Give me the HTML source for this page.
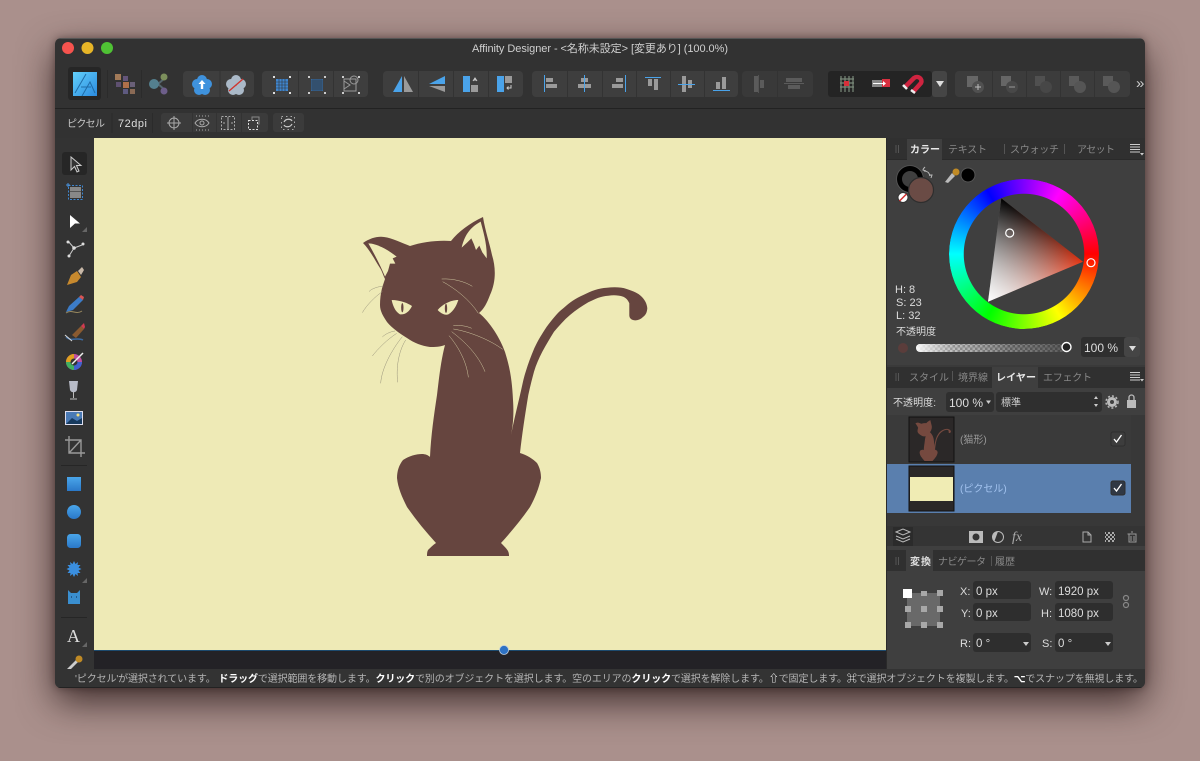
<!DOCTYPE html>
<html><head><meta charset="utf-8"><style>
html,body{margin:0;padding:0;background:#aa908c;width:1200px;height:761px;overflow:hidden}
#win{position:absolute;left:55px;top:38px;width:1090px;height:650px;border-radius:6px;box-shadow:0 14px 36px rgba(30,15,15,.75),0 0 8px rgba(30,15,15,.4)}
svg{position:absolute;left:0;top:0}
text{font-family:"Liberation Sans","Noto Sans CJK JP",sans-serif;font-size:11px;fill:#c8c8c8}
text[textLength]{font-size:10px}
.b{fill:#3e3e3e}.s{stroke:#333;stroke-width:1}
.g{fill:#9a9a9a}.bl{fill:#4aa3ea}
.d{opacity:.35}
</style></head><body><div id="win"></div>
<svg width="1200" height="761" viewBox="0 0 1200 761" xmlns="http://www.w3.org/2000/svg">
<defs>
<path id="cat" d="M363 243C370 238 378 236 384 237C392 238 402 243 410 246C422 242 438 240 451 241C458 232 470 223 483 217C485 230 490 245 492 255C496 268 496 282 490 295C487 303 484 309 479 313C490 322 500 338 505 352C510 368 512 380 513 400C514 415 513 425 511 435C514 420 517 408 520 395C522 387 523 380 525.700 371.700C528 364 531 356 534.300 348.300C538 340 542 334 546.700 326.700C552 320 557 313 563.300 308.300C569 303 576 298 583.300 295C591 291 599 288 606.700 287.700C614 287 621 287 626.700 289C633 291 638 293 641.700 296.700C645 300 647 304 647.300 308.300C647 312 646 315 643 317C640 320 636 321 633 320C630 319 629.300 317 629.300 315L629.300 303.300C628 300 626 298 623.300 296.700C618 295 613 295 608.300 295.700C601 296 595 299 588.300 302.300C582 306 576 310 570 315C564 320 559 326 554 331.700C550 338 546 345 542.300 351.700C539 358 536 365 534 371.700C532 379 530 387 528.300 395C525 415 522 435 520 453C527 455 533 459 537 463C540 468 541 473 541 478C539 488 535 498 530 507C521 520 511 532 501 543C504 546 507 549 508 551C509 553 509 555 509 556L427 556C427 554 427 552 428 550C430 548 433 545 436 543C426 532 416 520 407 507C402 497 398 488 397 478C397 471 399 465 403 460C409 456 416 454 422 454C425 454 428 455 430 457C431 435 434 415 437 395C439 378 441 360 445 345C440 347 435 347 430 347C422 346 414 343 407 338C399 333 392 328 387 322C383 316 380 311 380 305C380 298 381 291 383 285L385 279C383 275 382 271 380 268C376 262 370 250 363 243Z"/>
<pattern id="chk" width="5" height="5" patternUnits="userSpaceOnUse"><rect width="5" height="5" fill="#666"/><rect width="2.500" height="2.500" fill="#aaa"/><rect x="2.500" y="2.500" width="2.500" height="2.500" fill="#aaa"/></pattern>
<pattern id="chk2" width="4" height="4" patternUnits="userSpaceOnUse"><rect width="4" height="4" fill="#333"/><rect width="2" height="2" fill="#aaa"/><rect x="2" y="2" width="2" height="2" fill="#aaa"/></pattern>
<linearGradient id="fade" x1="0" x2="1" y1="0" y2="0"><stop offset="0" stop-color="#fff" stop-opacity=".95"/><stop offset=".25" stop-color="#ddd" stop-opacity=".35"/><stop offset=".6" stop-color="#555" stop-opacity=".45"/><stop offset="1" stop-color="#333" stop-opacity=".7"/></linearGradient>
<linearGradient id="tBase" gradientUnits="userSpaceOnUse" x1="995" y1="250" x2="1083" y2="262"><stop offset="0" stop-color="#807a78"/><stop offset="1" stop-color="#e8320f"/></linearGradient>
<linearGradient id="tBlack" gradientUnits="userSpaceOnUse" x1="1001" y1="198" x2="1035" y2="282"><stop offset="0" stop-color="#000"/><stop offset="1" stop-color="#000" stop-opacity="0"/></linearGradient>
<linearGradient id="tWhite" gradientUnits="userSpaceOnUse" x1="988" y1="302" x2="1042" y2="230"><stop offset="0" stop-color="#fff"/><stop offset="1" stop-color="#fff" stop-opacity="0"/></linearGradient>
<linearGradient id="blueT" x1="0" y1="0" x2="0" y2="1"><stop offset="0" stop-color="#4aa6ea"/><stop offset="1" stop-color="#2a78c8"/></linearGradient>
<linearGradient id="aff" x1="0" y1="0" x2="1" y2="1"><stop offset="0" stop-color="#62d0fb"/><stop offset="1" stop-color="#2b8be0"/></linearGradient>
<clipPath id="wc"><rect x="55" y="38" width="1090" height="650" rx="6"/></clipPath>
<clipPath id="th1"><rect x="910" y="418" width="43" height="43"/></clipPath>
</defs>
<g clip-path="url(#wc)">
<rect x="55" y="38" width="1090" height="650" fill="#323232"/>
<rect x="55" y="38" width="1090" height="1" fill="#555"/>
<!-- traffic lights -->
<circle cx="68" cy="48" r="6" fill="#f6534e"/><circle cx="87.500" cy="48" r="6" fill="#e7b527"/><circle cx="107" cy="48" r="6" fill="#4fc234"/>
<text x="472" y="52" textLength="256" style="font-size:11px;fill:#cfcfcf">Affinity Designer - &lt;名称未設定&gt; [変更あり] (100.0%)</text>
<!-- toolbar -->
<rect x="55" y="108" width="1090" height="1" fill="#222"/>
<rect x="68" y="67" width="33" height="33" rx="3" fill="#262626"/>
<rect x="73" y="72" width="24" height="24" fill="url(#aff)"/>
<path d="M75 93L86 74M82 96L90 82L95 93M81 87H91" stroke="#1f6ca8" stroke-width="1" fill="none"/>
<rect x="107" y="70" width="1" height="28" fill="#2b2b2b"/><rect x="141" y="70" width="1" height="28" fill="#2b2b2b"/>
<g><rect x="115" y="74" width="6" height="6" fill="#a27a58"/><rect x="123" y="76" width="5" height="5" fill="#64557a"/><rect x="116" y="82" width="5" height="5" fill="#5e5070"/><rect x="123" y="82" width="6" height="6" fill="#b0704a"/><rect x="130" y="82" width="5" height="5" fill="#6a6078"/><rect x="123" y="89" width="5" height="5" fill="#5e5a80"/><rect x="130" y="89" width="5" height="5" fill="#8a6a55"/></g>
<path d="M158 84L165 78M158 84L165 90" stroke="#55666e" stroke-width="2"/><circle cx="154" cy="84" r="5" fill="#54808f"/><circle cx="164" cy="77" r="3.500" fill="#7c8f5c"/><circle cx="164" cy="91" r="3.500" fill="#6d5e8a"/>
<!-- group 1 -->
<rect x="183" y="71" width="71" height="26" rx="4" class="b"/><rect x="219.500" y="71" width="1" height="26" fill="#333"/>
<g fill="#3f92dd"><circle cx="202" cy="80" r="5"/><circle cx="207" cy="84" r="5"/><circle cx="205" cy="90" r="5"/><circle cx="199" cy="90" r="5"/><circle cx="197" cy="84" r="5"/></g>
<path d="M202 80l-3.500 4h2.300v5h2.400v-5h2.300z" fill="#fff"/>
<g fill="#aab9c8"><circle cx="236" cy="80" r="5"/><circle cx="241" cy="84" r="5"/><circle cx="239" cy="90" r="5"/><circle cx="233" cy="90" r="5"/><circle cx="231" cy="84" r="5"/></g>
<path d="M229 91L243 79" stroke="#d0352e" stroke-width="1.400"/>
<!-- group 2 -->
<rect x="262" y="71" width="106" height="26" rx="4" class="b"/><rect x="298" y="71" width="1" height="26" fill="#333"/><rect x="333" y="71" width="1" height="26" fill="#333"/>
<g fill="#4a90d8"><rect x="276" y="79" width="12" height="12" fill="#3f86cf"/></g>
<path d="M279 79v12M282 79v12M285 79v12M276 82h12M276 85h12M276 88h12" stroke="#333" stroke-width=".6"/>
<g fill="#ddd"><rect x="273" y="76" width="2" height="2"/><rect x="289" y="76" width="2" height="2"/><rect x="273" y="92" width="2" height="2"/><rect x="289" y="92" width="2" height="2"/></g>
<rect x="311" y="79" width="12" height="12" fill="#35689c"/>
<path d="M313 79v12M315 79v12M317 79v12M319 79v12M321 79v12M311 81h12M311 83h12M311 85h12M311 87h12M311 89h12" stroke="#333" stroke-width=".5"/>
<g fill="#ccc"><rect x="308" y="76" width="2" height="2"/><rect x="324" y="76" width="2" height="2"/><rect x="308" y="92" width="2" height="2"/><rect x="324" y="92" width="2" height="2"/></g>
<g fill="none" stroke="#999"><rect x="344" y="79" width="12" height="12"/><circle cx="354" cy="80" r="4"/><path d="M344 81v8l6-4z"/></g>
<g fill="#ccc"><rect x="342" y="76" width="2" height="2"/><rect x="358" y="76" width="2" height="2"/><rect x="342" y="92" width="2" height="2"/><rect x="358" y="92" width="2" height="2"/></g>
<!-- group 3 -->
<rect x="383" y="71" width="140" height="26" rx="4" class="b"/>
<rect x="418" y="71" width="1" height="26" fill="#333"/><rect x="453" y="71" width="1" height="26" fill="#333"/><rect x="488" y="71" width="1" height="26" fill="#333"/>
<path d="M402 76L393 92H402Z" class="bl"/><path d="M404 76L413 92H404Z" class="g"/>
<path d="M445 76L429 84H445Z" class="bl"/><path d="M445 86L429 86L445 92Z" class="g"/>
<rect x="463" y="76" width="7" height="16" class="bl"/><rect x="471" y="85" width="7" height="7" class="g"/><path d="M473 81l2-3 2 3M475 78v3" stroke="#ccc" fill="none"/>
<rect x="497" y="76" width="7" height="16" class="bl"/><rect x="505" y="76" width="7" height="7" class="g"/><path d="M511 85v3h-4m1.500-1.500L507 88l1.500 1.500" stroke="#ccc" fill="none"/>
<!-- group 4 -->
<rect x="532" y="71" width="206" height="26" rx="4" class="b"/>
<rect x="567" y="71" width="1" height="26" fill="#333"/><rect x="602" y="71" width="1" height="26" fill="#333"/><rect x="636" y="71" width="1" height="26" fill="#333"/><rect x="670" y="71" width="1" height="26" fill="#333"/><rect x="704" y="71" width="1" height="26" fill="#333"/>
<rect x="544" y="75" width="1" height="17" class="bl"/><rect x="546" y="78" width="7" height="4" class="g"/><rect x="546" y="84" width="11" height="4" class="g"/>
<rect x="581" y="78" width="7" height="4" class="g"/><rect x="578" y="84" width="13" height="4" class="g"/><rect x="584" y="75" width="1" height="17" class="bl"/>
<rect x="625" y="75" width="1" height="17" class="bl"/><rect x="616" y="78" width="7" height="4" class="g"/><rect x="612" y="84" width="11" height="4" class="g"/>
<rect x="645" y="77" width="16" height="1" class="bl"/><rect x="648" y="79" width="4" height="7" class="g"/><rect x="654" y="79" width="4" height="11" class="g"/>
<rect x="682" y="76" width="4" height="16" class="g"/><rect x="688" y="80" width="4" height="8" class="g"/><rect x="678" y="84" width="17" height="1" class="bl"/>
<rect x="713" y="90" width="17" height="1" class="bl"/><rect x="716" y="82" width="4" height="7" class="g"/><rect x="722" y="77" width="4" height="12" class="g"/>
<!-- group 5 -->
<rect x="742" y="71" width="71" height="26" rx="4" fill="#393939"/><rect x="777" y="71" width="1" height="26" fill="#333"/>
<g class="d"><rect x="754" y="76" width="4" height="16" class="g"/><rect x="760" y="80" width="4" height="8" class="g"/><rect x="758" y="75" width="1" height="18" class="bl" style="fill:#888"/><rect x="786" y="78" width="16" height="4" class="g"/><rect x="788" y="85" width="12" height="4" class="g"/><rect x="784" y="83" width="20" height="1" class="g"/></g>
<!-- snap -->
<rect x="828" y="71" width="104" height="26" rx="3" fill="#242424"/>
<rect x="932" y="71" width="15" height="26" rx="3" fill="#454545"/><path d="M936 81h8l-4 6z" fill="#ddd"/>
<g stroke="#7a8a7a" stroke-width="1.200"><path d="M841 76v16M845 76v16M849 76v16M853 76v16M840 79h14M840 83h14M840 87h14"/></g><rect x="844" y="81" width="5" height="5" fill="#d8303a"/>
<rect x="872" y="80" width="10" height="7" fill="#888"/><rect x="882" y="79" width="8" height="8" fill="#d93040"/><path d="M873 83.500h11" stroke="#fff"/><path d="M883 81l3 2.500-3 2.500z" fill="#fff"/>
<path d="M905 87L914 78C918 75 923 79 921 83L913 92" fill="none" stroke="#cf2440" stroke-width="4.500"/><path d="M903 85l4 4M911 90l4 3" stroke="#eee" stroke-width="2.500"/>
<!-- bool -->
<rect x="955" y="71" width="175" height="26" rx="4" fill="#3c3c3c"/>
<rect x="992" y="71" width="1" height="26" fill="#333"/><rect x="1026" y="71" width="1" height="26" fill="#333"/><rect x="1060" y="71" width="1" height="26" fill="#333"/><rect x="1094" y="71" width="1" height="26" fill="#333"/>
<g><rect x="967" y="76" width="11" height="11" fill="#666"/><circle cx="978" cy="87" r="6" fill="#505050"/><path d="M975 87h6M978 84v6" stroke="#bbb"/>
<rect x="1001" y="76" width="10" height="10" fill="#666"/><circle cx="1012" cy="87" r="6" fill="#484848"/><path d="M1009 87h6" stroke="#999"/>
<rect x="1035" y="76" width="10" height="10" fill="#505050"/><circle cx="1046" cy="87" r="6" fill="#474747"/>
<rect x="1069" y="76" width="10" height="10" fill="#5a5a5a"/><circle cx="1080" cy="87" r="6" fill="#555"/>
<rect x="1103" y="76" width="10" height="10" fill="#5a5a5a"/><circle cx="1114" cy="87" r="6" fill="#555"/></g>
<text x="1136" y="88" style="font-size:15px;fill:#ccc">»</text>
<!-- context toolbar -->
<text x="67" y="127" textLength="38">ピクセル</text>
<text x="118" y="127" textLength="29" style="font-size:11px;fill:#ddd">72dpi</text>
<rect x="111.500" y="113" width="1" height="20" fill="#2b2b2b"/><rect x="152" y="113" width="1" height="20" fill="#2b2b2b"/>
<rect x="161" y="113" width="107" height="19" rx="3" fill="#3b3b3b"/><rect x="273" y="113" width="31" height="19" rx="3" fill="#3b3b3b"/>
<rect x="192" y="113" width="1" height="19" fill="#333"/><rect x="216" y="113" width="1" height="19" fill="#333"/><rect x="241" y="113" width="1" height="19" fill="#333"/>
<g fill="none" stroke="#aaa"><circle cx="174" cy="123" r="5"/><path d="M174 116v14M167 123h14"/>
<path d="M195 123c3-5 11-5 14 0c-3 5-11 5-14 0z"/><circle cx="202" cy="123" r="2"/><path d="M196 116h13M196 130h13" stroke-dasharray="1 2"/>
<rect x="221.500" y="116.500" width="13" height="13" stroke-dasharray="2 1.500"/><path d="M228 117v12M223 123h2M231 123h2"/>
<rect x="248.500" y="120.500" width="9" height="9" stroke="#ddd" stroke-dasharray="2 1.500"/><path d="M252 120v-3h7v7h-1" stroke="#888"/>
<rect x="281.500" y="116.500" width="13" height="13" stroke-dasharray="1.500 3"/><path d="M284 122c2-4 7-3 8-1M292 124c-2 4-7 3-8 1" stroke="#ccc" stroke-width="1.200"/></g>
<!-- left tools -->
<rect x="55" y="138" width="39" height="531" fill="#333"/>
<rect x="62" y="152" width="25" height="23" rx="3" fill="#262626"/>
<path d="M71 157V170L74.500 166.500L77 172L79 171L76.500 165.500H81Z" fill="#333" stroke="#ccc"/>
<rect x="68.500" y="185.500" width="14" height="14" fill="none" stroke="#3d86d0" stroke-dasharray="2 1.500"/><rect x="70" y="187" width="11" height="11" fill="#888"/><rect x="70" y="191" width="11" height="1" fill="#555"/><path d="M66 185h4M68 183v4" stroke="#4a90d8"/>
<path d="M70 215V228L75 223.500H80Z" fill="#fff"/><path d="M82 232l5-5v5z" fill="#666"/>
<path d="M68 241L74 248L82 245M74 248L69 256" stroke="#ccc" fill="none"/><circle cx="74" cy="248" r="1.800" fill="#ddd"/><circle cx="68" cy="242" r="1.500" fill="#ddd"/><circle cx="83" cy="244" r="1.500" fill="#ddd"/><circle cx="69" cy="256" r="1.500" fill="#ddd"/>
<path d="M67 285L71 275L77 271L81 277L77 282Z" fill="#c7892e"/><path d="M78 271L82 267L84 270L81 275Z" fill="#c8b8a8"/>
<path d="M66 312L69 306L79 297L83 300L73 310Z" fill="#3c7cc8"/><path d="M79 297L81 295L84 297L83 300Z" fill="#d85555"/><path d="M66 313C72 309 76 315 82 311" stroke="#9a8a60" fill="none"/>
<path d="M72 335L81 326L84 329L76 338Z" fill="#8a5a30"/><path d="M81 326L84 323L85 327L84 329Z" fill="#d23a50"/><path d="M66 337C71 342 77 337 83 340" stroke="#3c6aa0" fill="none" stroke-width="1.500"/><path d="M65 335L72 341" stroke="#ddd"/>
<circle cx="74" cy="362" r="8" fill="#c050a0"/><path d="M66 362A8 8 0 0 1 74 354L74 362Z" fill="#e0a020"/><path d="M66 362A8 8 0 0 0 74 370L74 362Z" fill="#40b060"/><path d="M74 370A8 8 0 0 0 82 362L74 362Z" fill="#4060d0"/><circle cx="74" cy="362" r="3.500" fill="#333"/><path d="M72 364L83 353" stroke="#eee" stroke-width="1.500"/>
<path d="M69 381H78L77 390C76 393 71 393 70 390Z" fill="#b8bcc8"/><path d="M73.500 392V398M70 399H77" stroke="#bbb"/>
<rect x="65" y="411" width="18" height="14" fill="#dde" /><rect x="66" y="412" width="16" height="12" fill="#4a7ab5"/><path d="M66 424L72 418L77 421L82 418V424Z" fill="#173a5e"/><circle cx="78" cy="415" r="1.500" fill="#f4e080"/>
<path d="M69 436V453H85M65 440H81V457M69 453L81 440" stroke="#999" fill="none" stroke-width="1.400"/>
<rect x="61" y="465" width="26" height="1" fill="#262626"/>
<rect x="67" y="477" width="14" height="14" fill="url(#blueT)"/>
<circle cx="74" cy="512" r="7" fill="url(#blueT)"/>
<rect x="67" y="534" width="14" height="14" rx="3.500" fill="url(#blueT)"/>
<path d="M74 561l1.500 3 2.500-2-.5 3 3 0-2 2.500 3 1.500-3 1.500 2 2.500-3 0 .5 3-2.500-2-1.500 3-1.500-3-2.500 2 .5-3-3 0 2-2.500-3-1.500 3-1.500-2-2.500 3 0-.5-3 2.500 2z" fill="#3a8fe0"/><path d="M82 583l5-5v5z" fill="#666"/>
<path d="M68 590L71 593H77L80 590V604H68Z" fill="#3a8fd0"/><path d="M71 597h1M76 597h1" stroke="#1d4a7a" stroke-width="1.500"/>
<rect x="61" y="617" width="26" height="1" fill="#262626"/>
<text x="67" y="642" style="font-family:'Liberation Serif',serif;font-size:18px;fill:#ddd">A</text><path d="M82 647l5-5v5z" fill="#666"/>
<path d="M67 669L76 660L78 662L70 670Z" fill="#ccc"/><circle cx="79" cy="659" r="3.500" fill="#c08a25"/>
<!-- canvas -->
<rect x="94" y="138" width="792" height="531" fill="#232226"/>
<rect x="94" y="138" width="792" height="512" fill="#eeeab6"/>
<rect x="94" y="650" width="792" height="1" fill="#1c4a6e"/>
<circle cx="504" cy="650" r="4.500" fill="#2e72c4" stroke="#bcd" stroke-width=".8"/>
<use href="#cat" fill="#66453f"/>
<g transform="translate(350 205) scale(.33333)">
<path d="M55 115C80 115 115 135 140 155L128 160L136 176L120 176L114 198L105 215C95 190 75 150 55 115Z" fill="#eeeab6"/>
<path d="M392 50C365 65 345 85 335 128L352 112L364 100L372 118L378 135L388 122L397 142L410 160C412 120 400 80 392 50Z" fill="#eeeab6"/>
<path d="M125 285C150 285 175 295 186 303C178 320 165 330 150 328C135 320 128 300 125 285Z" fill="#eeeab6"/><ellipse cx="157" cy="308" rx="3.500" ry="14" fill="#66453f"/>
<path d="M325 285C300 285 275 300 263 315C272 325 285 332 295 328C312 318 320 300 325 285Z" fill="#eeeab6"/><ellipse cx="288" cy="310" rx="3.500" ry="14" fill="#66453f"/>
<g fill="none" stroke="#cfc6a0" stroke-width="1.500"><path d="M275 222C310 220 345 230 367 244"/><path d="M278 230C315 250 360 285 385 325"/><path d="M310 362C330 360 350 363 365 370"/><path d="M310 372C360 380 420 405 458 433"/><path d="M305 380C345 410 385 450 405 500"/><path d="M297 392C325 425 350 470 355 517"/></g>
<g fill="none" stroke="#98937a" stroke-width="1.500"><path d="M100 243C85 245 65 250 57 260"/><path d="M97 260C75 275 50 300 37 323"/><path d="M135 378C120 380 105 388 97 396"/><path d="M140 385C110 405 85 430 67 453"/><path d="M157 395C125 435 95 490 92 535"/><path d="M167 405C145 440 138 490 143 532"/></g>
</g>
<!-- right panel -->
<rect x="887" y="138" width="258" height="531" fill="#3f3f3f"/>
<rect x="886" y="138" width="1" height="531" fill="#2a2a2a"/>
<rect x="887" y="138" width="258" height="22" fill="#303030"/><rect x="887" y="159" width="258" height="1" fill="#2a2a2a"/>
<path d="M896 145v8M898.500 145v8" stroke="#555"/>
<rect x="907" y="139" width="35" height="21" fill="#3f3f3f"/>
<text x="910" y="153" textLength="30" style="font-weight:700;fill:#e8e8e8">カラー</text>
<text x="948" y="153" textLength="39" style="fill:#888">テキスト</text>
<text x="1010" y="153" textLength="49" style="fill:#888">スウォッチ</text>
<text x="1077" y="153" textLength="38" style="fill:#888">アセット</text>
<rect x="1004" y="144" width="1" height="10" fill="#555"/><rect x="1064" y="144" width="1" height="10" fill="#555"/>
<path d="M1130 144.500h10M1130 147h10M1130 149.500h10M1130 152h10" stroke="#ccc"/><path d="M1140 153h4l-2 2.500z" fill="#ccc"/>
<!-- swatches -->
<circle cx="910" cy="179" r="10.500" fill="none" stroke="#000" stroke-width="5"/><circle cx="910" cy="179" r="13.500" fill="none" stroke="#555" stroke-width=".8"/>
<circle cx="921" cy="190" r="12.500" fill="#6a4b45" stroke="#2e2e2e" stroke-width="1.200"/>
<path d="M924 171c3 0 5 1 6 5M925 167c-1 1-2 2-2 3l3 1M931 178l1-3-3 0" stroke="#bbb" fill="none"/>
<circle cx="903" cy="197.500" r="5" fill="#fff" stroke="#333"/><path d="M899.500 201L906.500 194" stroke="#d03030" stroke-width="1.500"/>
<path d="M945 182L952 173L955 176L948 183Z" fill="#bbb"/><circle cx="956" cy="172" r="3.500" fill="#c08a25"/>
<circle cx="968" cy="175" r="7" fill="#000" stroke="#555"/>
<!-- wheel -->
<foreignObject x="949" y="179" width="150" height="150"><div xmlns="http://www.w3.org/1999/xhtml" style="width:150px;height:150px;border-radius:50%;background:conic-gradient(from 90deg,#f00,#ff0,#0f0,#0ff,#00f,#f0f,#f00);-webkit-mask:radial-gradient(circle,transparent 60px,#000 60.500px);mask:radial-gradient(circle,transparent 60px,#000 60.500px)"></div></foreignObject>
<polygon points="1001.300,198.300 1083,261.700 988,301.700" fill="url(#tBase)"/>
<polygon points="1001.300,198.300 1083,261.700 988,301.700" fill="url(#tBlack)"/>
<polygon points="1001.300,198.300 1083,261.700 988,301.700" fill="url(#tWhite)"/>
<circle cx="1009.700" cy="233" r="4" fill="none" stroke="#fff" stroke-width="1.200"/><circle cx="1091" cy="262.700" r="4" fill="none" stroke="#fff" stroke-width="1.200"/>
<text x="895" y="293" style="fill:#ddd">H: 8</text><text x="896" y="306" style="fill:#ddd">S: 23</text><text x="896" y="319" style="fill:#ddd">L: 32</text>
<text x="896" y="335" textLength="40" style="fill:#ddd">不透明度</text>
<circle cx="903" cy="348" r="5" fill="#5b3d3b"/>
<rect x="916" y="344" width="155" height="8" rx="4" fill="url(#chk)"/><rect x="916" y="344" width="155" height="8" rx="4" fill="url(#fade)"/>
<circle cx="1066.500" cy="347" r="4.500" fill="#222" stroke="#fff" stroke-width="1.400"/>
<rect x="1081" y="337" width="59" height="20" rx="3" fill="#2f2f2f"/><rect x="1124" y="337" width="16" height="20" rx="3" fill="#454545"/><path d="M1129 346h7l-3.500 5z" fill="#ddd"/>
<text x="1084" y="352" style="font-size:12px;fill:#ddd">100 %</text>
<!-- layers -->
<rect x="887" y="365" width="258" height="23" fill="#303030"/><rect x="887" y="365" width="258" height="2" fill="#3a3a3a"/>
<path d="M896 373v8M898.500 373v8" stroke="#555"/>
<rect x="992" y="367" width="46" height="21" fill="#3f3f3f"/>
<text x="909" y="381" textLength="40" style="fill:#888">スタイル</text><rect x="952" y="371" width="1" height="10" fill="#555"/>
<text x="958" y="381" textLength="30" style="fill:#888">境界線</text>
<text x="996" y="381" textLength="40" style="font-weight:700;fill:#e8e8e8">レイヤー</text>
<text x="1043" y="381" textLength="49" style="fill:#888">エフェクト</text>
<path d="M1130 372.500h10M1130 375h10M1130 377.500h10M1130 380h10" stroke="#ccc"/><path d="M1140 379h4l-2 2.500z" fill="#ccc"/>
<text x="893" y="406" textLength="43" style="fill:#ddd">不透明度:</text>
<rect x="946" y="392" width="48" height="20" rx="3" fill="#2f2f2f"/><text x="949" y="407" style="font-size:12px;fill:#ddd">100 %</text><path d="M986 400.500h5l-2.500 3.500z" fill="#ccc"/>
<rect x="996" y="392" width="106" height="20" rx="3" fill="#2f2f2f"/><text x="1001" y="406" textLength="20" style="fill:#ccc">標準</text><path d="M1094 399l2-3 2 3zM1094 404l2 3 2-3z" fill="#ccc"/>
<circle cx="1112" cy="402" r="3.500" fill="none" stroke="#bbb" stroke-width="3"/><circle cx="1112" cy="402" r="6" fill="none" stroke="#bbb" stroke-width="1.500" stroke-dasharray="2 2"/>
<rect x="1127" y="400" width="9" height="8" fill="#bbb"/><path d="M1129 400v-2.500a2.500 2.500 0 0 1 5 0v2.500" fill="none" stroke="#bbb" stroke-width="1.300"/>
<rect x="887" y="415" width="258" height="112" fill="#383838"/>
<rect x="887" y="415" width="244" height="49" fill="#3a3a3a"/>
<rect x="887" y="464" width="244" height="49" fill="#5a7fae"/>
<rect x="909" y="417" width="45" height="45" fill="#2b2828" stroke="#111"/>
<g clip-path="url(#th1)"><use href="#cat" transform="translate(870 393) scale(.125)" fill="#75493f"/></g>
<rect x="909" y="466" width="45" height="45" fill="#2b2828" stroke="#111"/><rect x="910" y="477" width="43" height="24" fill="#f0ecb4"/>
<text x="960" y="443" style="font-size:10px;fill:#999">(猫形)</text>
<text x="960" y="492" style="font-size:10px;fill:#a3c3ef">(ピクセル)</text>
<rect x="1111" y="432" width="14" height="14" rx="2" fill="#3d3d3d" stroke="#2e2e2e"/><path d="M1114 439l2.500 3 5-7" stroke="#fff" fill="none" stroke-width="1.300"/>
<rect x="1111" y="481" width="14" height="14" rx="2" fill="#303844" stroke="#2e2e2e"/><path d="M1114 488l2.500 3 5-7" stroke="#fff" fill="none" stroke-width="1.300"/>
<rect x="887" y="526" width="258" height="20" fill="#343434"/>
<rect x="893" y="527" width="20" height="19" fill="#2b2b2b"/>
<path d="M896 532l7-3 7 3-7 3zM896 536l7 3 7-3M896 539l7 3 7-3" fill="none" stroke="#bbb"/>
<rect x="969" y="531" width="14" height="12" fill="#bbb"/><circle cx="976" cy="537" r="3.500" fill="#333"/>
<circle cx="998" cy="537" r="5.500" fill="#333" stroke="#bbb"/><path d="M998 531.500a5.500 5.500 0 0 0 -3.500 9.500z" fill="#bbb"/>
<text x="1012" y="541" style="font-family:'Liberation Serif',serif;font-style:italic;font-size:14px;fill:#aaa">fx</text>
<path d="M1083 532h5l3 3v7h-8z M1088 532v3h3" fill="none" stroke="#aaa"/>
<rect x="1105" y="532" width="10" height="10" fill="url(#chk2)"/>
<path d="M1127.500 534h9M1131 532h2M1129 534v8h7v-8M1131 536v5M1134 536v5" stroke="#999" fill="none"/>
<!-- transform -->
<rect x="887" y="546" width="258" height="4" fill="#3f3f3f"/>
<rect x="887" y="550" width="258" height="21" fill="#303030"/>
<path d="M896 557v8M898.500 557v8" stroke="#555"/>
<rect x="906" y="550" width="27" height="21" fill="#3f3f3f"/>
<text x="910" y="565" textLength="21" style="font-weight:700;fill:#e0e0e0">変換</text>
<text x="938" y="565" textLength="48" style="fill:#888">ナビゲータ</text><rect x="991" y="556" width="1" height="10" fill="#555"/>
<text x="995" y="565" textLength="20" style="fill:#888">履歴</text>
<rect x="907" y="593" width="33" height="33" fill="#696969"/>
<g fill="#a8a8a8"><rect x="921" y="591" width="6" height="5"/><rect x="937" y="590" width="6" height="6"/><rect x="905" y="606" width="6" height="6"/><rect x="921" y="606" width="6" height="6"/><rect x="937" y="606" width="6" height="6"/><rect x="905" y="622" width="6" height="6"/><rect x="921" y="622" width="6" height="6"/><rect x="937" y="622" width="6" height="6"/></g>
<rect x="903" y="589" width="9" height="9" fill="#fff"/>
<g style="fill:#ddd"><text x="960" y="595" style="fill:#ddd">X:</text><text x="961" y="617" style="fill:#ddd">Y:</text><text x="1039" y="595" style="fill:#ddd">W:</text><text x="1041" y="617" style="fill:#ddd">H:</text><text x="960" y="647" style="fill:#ddd">R:</text><text x="1042" y="647" style="fill:#ddd">S:</text></g>
<rect x="973" y="581" width="58" height="18" rx="3" fill="#2e2e2e"/><rect x="973" y="603" width="58" height="18" rx="3" fill="#2e2e2e"/><rect x="1055" y="581" width="58" height="18" rx="3" fill="#2e2e2e"/><rect x="1055" y="603" width="58" height="18" rx="3" fill="#2e2e2e"/><rect x="973" y="633" width="58" height="19" rx="3" fill="#2e2e2e"/><rect x="1055" y="633" width="58" height="19" rx="3" fill="#2e2e2e"/>
<text x="976" y="595" style="font-size:11.500px;fill:#ddd">0 px</text><text x="976" y="617" style="font-size:11.500px;fill:#ddd">0 px</text><text x="1058" y="595" style="font-size:11.500px;fill:#ddd">1920 px</text><text x="1058" y="617" style="font-size:11.500px;fill:#ddd">1080 px</text><text x="976" y="647" style="font-size:11.500px;fill:#ddd">0 °</text><text x="1058" y="647" style="font-size:11.500px;fill:#ddd">0 °</text>
<path d="M1023 642h6l-3 4zM1105 642h6l-3 4z" fill="#ccc"/>
<g fill="none" stroke="#888" stroke-width="1.200"><circle cx="1126" cy="598" r="2.500"/><circle cx="1126" cy="605" r="2.500"/></g>
<!-- status -->
<rect x="55" y="669" width="1090" height="19" fill="#333"/>
<rect x="55" y="687" width="1090" height="1" fill="#222"/>
<text x="75" y="682" textLength="1068" style="font-size:10px;fill:#b5b5b5">'ピクセル'が選択されています。 <tspan style="font-weight:700;fill:#fff">ドラッグ</tspan>で選択範囲を移動します。<tspan style="font-weight:700;fill:#fff">クリック</tspan>で別のオブジェクトを選択します。空のエリアの<tspan style="font-weight:700;fill:#fff">クリック</tspan>で選択を解除します。<tspan style="font-weight:700;fill:#fff">⇧</tspan>で固定します。<tspan style="font-weight:700;fill:#fff">⌘</tspan>で選択オブジェクトを複製します。<tspan style="font-weight:700;fill:#fff">⌥</tspan>でスナップを無視します。</text>
</g>
</svg></body></html>
